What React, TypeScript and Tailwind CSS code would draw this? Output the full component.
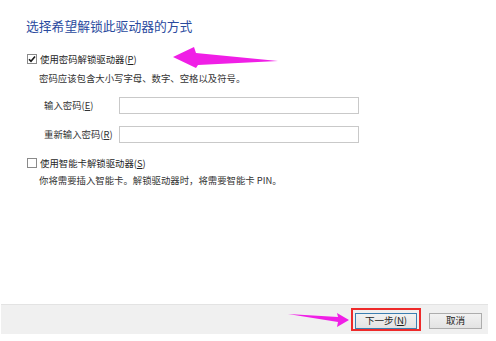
import React from "react";

const font = { fontFamily: '"Noto Sans CJK SC", "Noto Sans", sans-serif' };

function Mn({ k }: { k: string }) {
  return (
    <span>
      (<span className="underline underline-offset-1">{k}</span>)
    </span>
  );
}

function Check({ checked }: { checked?: boolean }) {
  return (
    <div className="w-[10px] h-[10px] border border-[#8a8a8a] bg-white flex items-center justify-center shrink-0">
      {checked && (
        <svg width="8" height="8" viewBox="0 0 8 8">
          <path d="M1 4.2 L3 6.3 L7 1.5" fill="none" stroke="#1a1a1a" strokeWidth="1.6" />
        </svg>
      )}
    </div>
  );
}

export default function App() {
  return (
    <div
      className="relative w-[496px] h-[341px] bg-white flex flex-col text-[#1e1e1e] overflow-hidden"
      style={font}
    >
      <div className="pl-[26px] pt-[18px] flex flex-col">
        <div className="h-[16px] leading-[16px] text-[12.8px] text-[#2a4a9e]">
          选择希望解锁此驱动器的方式
        </div>

        <div className="mt-[19px] h-[12px] flex items-center gap-[3px] pl-[1px] text-[9.4px] leading-[12px]">
          <Check checked />
          <span>
            使用密码解锁驱动器<Mn k="P" />
          </span>
        </div>
        <div className="mt-[7px] h-[12px] pl-[13px] text-[9.4px] leading-[12px] text-[#333]">
          密码应该包含大小写字母、数字、空格以及符号。
        </div>

        <div className="mt-[13px] pl-[18px] flex flex-col gap-[12px]">
          <div className="flex items-center h-[17px]">
            <div className="w-[75px] text-[9.4px] text-[#333]">
              输入密码<Mn k="E" />
            </div>
            <div className="w-[240px] h-[17px] border border-[#c9c9c9] bg-white" />
          </div>
          <div className="flex items-center h-[17px]">
            <div className="w-[75px] text-[9.4px] text-[#333] whitespace-nowrap">
              重新输入密码<Mn k="R" />
            </div>
            <div className="w-[240px] h-[17px] border border-[#c9c9c9] bg-white" />
          </div>
        </div>

        <div className="mt-[14px] h-[12px] flex items-center gap-[3px] pl-[1px] text-[9.4px] leading-[12px]">
          <Check />
          <span>
            使用智能卡解锁驱动器<Mn k="S" />
          </span>
        </div>
        <div className="mt-[5px] h-[12px] pl-[13px] text-[9.4px] leading-[12px] text-[#333]">
          你将需要插入智能卡。解锁驱动器时，将需要智能卡 PIN。
        </div>
      </div>

      <div className="flex-1" />

      <div className="ml-[1px] w-[487px] h-[30px] bg-[#f0f0f0] border-t border-[#e3e3e3] flex items-start justify-end pt-[8px] pr-[6px] gap-[12px]">
        <div className="w-[62px] h-[16px] border border-[#3c7fb1] bg-gradient-to-b from-[#f2f2f2] to-[#e3e3e3] flex items-center justify-center text-[9.6px] leading-none">
          下一步<Mn k="N" />
        </div>
        <div className="w-[53px] h-[16px] border border-[#adadad] bg-gradient-to-b from-[#f2f2f2] to-[#e3e3e3] flex items-center justify-center text-[9.6px] leading-none">
          取消
        </div>
      </div>
      <div className="h-[7px]" />

      {/* red highlight box */}
      <div className="absolute left-[351px] top-[308px] w-[70px] h-[23px] border-[2.5px] border-[#ee2a2a]" />

      {/* magenta arrows */}
      <svg className="absolute left-0 top-0 pointer-events-none" width="496" height="341">
        <polygon
          points="173,57 194,47 196,53 278,61 198,65 196,68"
          fill="#f01fe6"
        />
        <polygon
          points="349,320 337,313 338,317 288,314 338,322 337,327"
          fill="#f01fe6"
        />
      </svg>
    </div>
  );
}
